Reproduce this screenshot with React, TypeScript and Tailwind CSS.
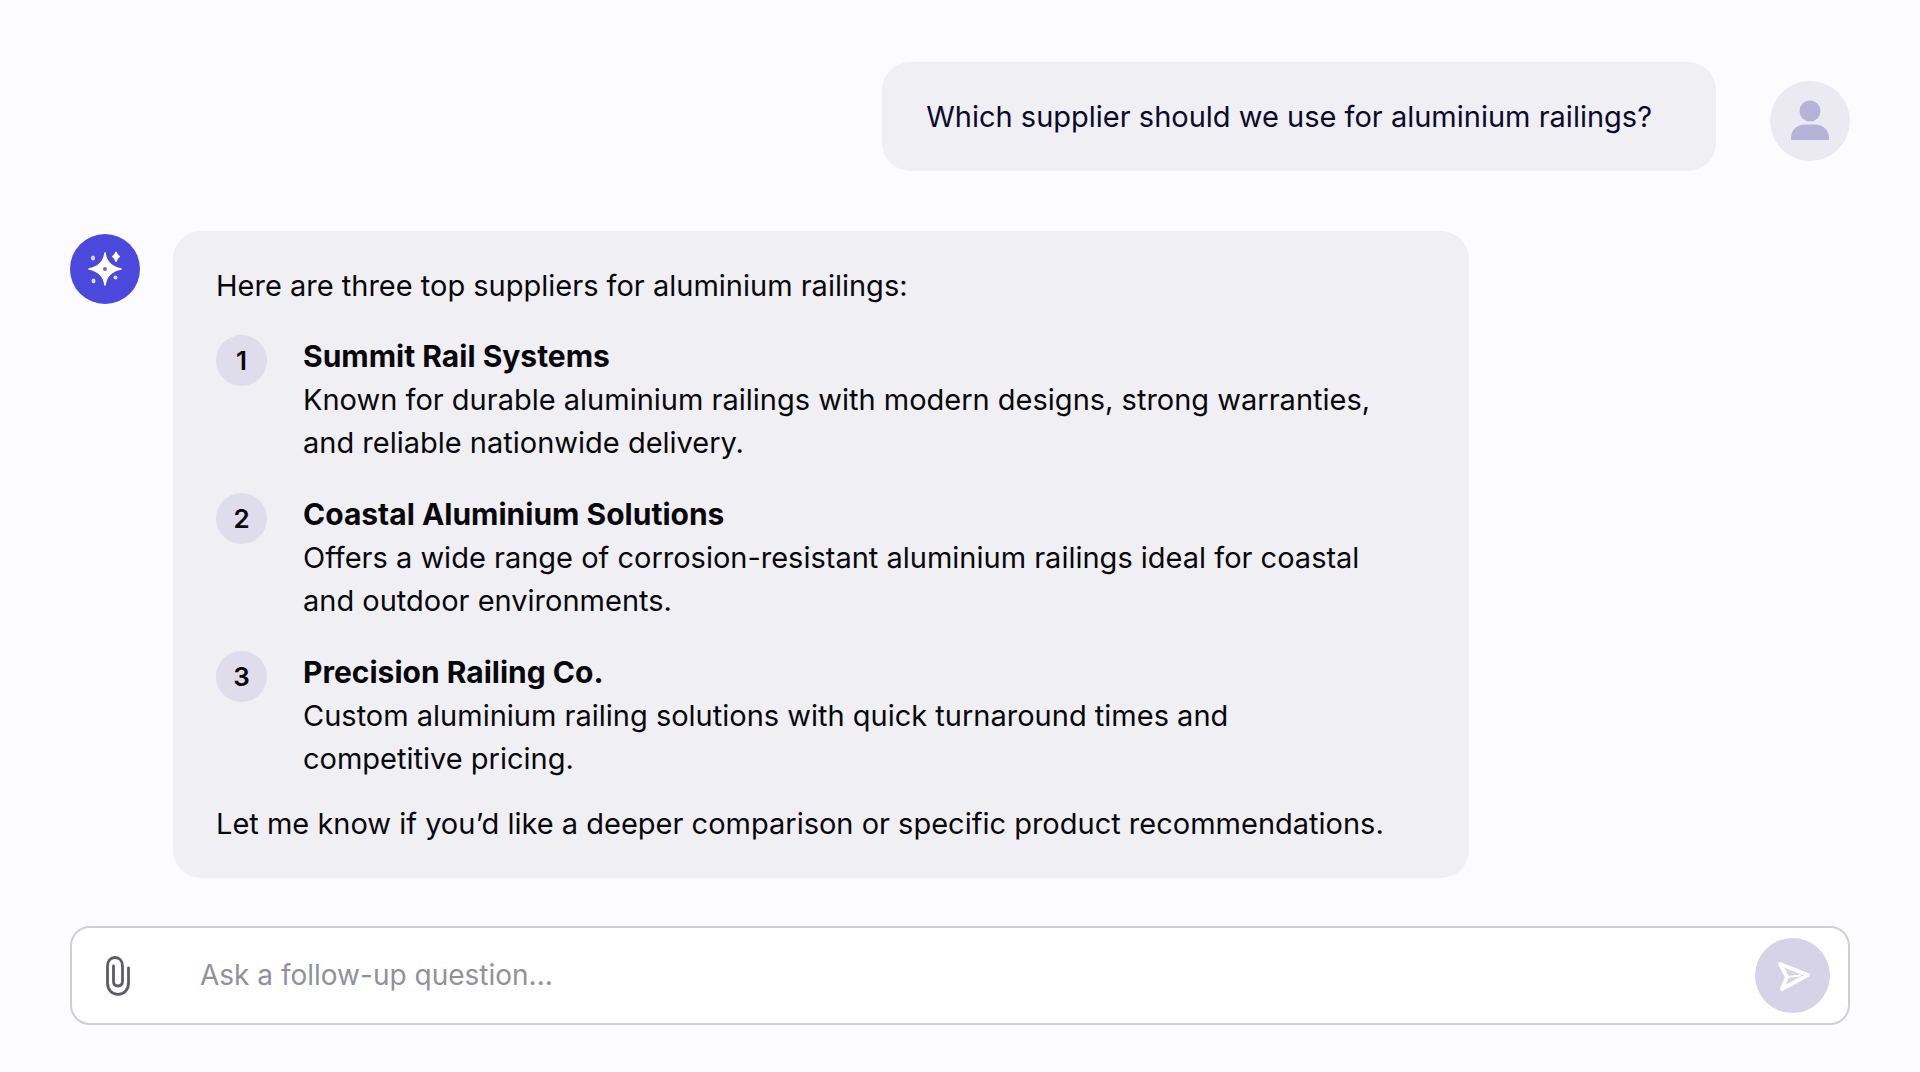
import { useState } from "react";

type Supplier = {
  name: string;
  description: string;
};

const suppliers: Supplier[] = [
  {
    name: "Summit Rail Systems",
    description:
      "Known for durable aluminium railings with modern designs, strong warranties, and reliable nationwide delivery.",
  },
  {
    name: "Coastal Aluminium Solutions",
    description:
      "Offers a wide range of corrosion-resistant aluminium railings ideal for coastal and outdoor environments.",
  },
  {
    name: "Precision Railing Co.",
    description:
      "Custom aluminium railing solutions with quick turnaround times and competitive pricing.",
  },
];

const SparkleIcon = () => (
  <svg viewBox="0 0 70 70" className="h-full w-full" fill="white" aria-hidden="true">
    <path d="M35 19 C36 28 41 33 51 35 C41 37 36 42 35 51 C34 42 29 37 19 35 C29 33 34 28 35 19 Z" stroke="white" strokeWidth="1.6" strokeLinejoin="round" />
    <path d="M46 18.5 C46.6 20.6 47.3 21.6 49 22.5 C47.3 23.4 46.6 24.4 46 27 C45.4 24.4 44.7 23.4 43 22.5 C44.7 21.6 45.4 20.6 46 18.5 Z" stroke="white" strokeWidth="1.8" strokeLinejoin="round" />
    <ellipse cx="23" cy="24" rx="2" ry="2.6" opacity="0.8" />
    <ellipse cx="23.5" cy="47" rx="2" ry="2.4" opacity="0.8" />
    <circle cx="45.5" cy="43.5" r="2" opacity="0.8" />
    <circle cx="35" cy="35" r="2" fill="#6d6bc0" />
  </svg>
);

const PersonIcon = () => (
  <svg viewBox="0 0 80 80" className="h-full w-full" fill="#b7b2d8" aria-hidden="true">
    <circle cx="40" cy="30" r="10.5" />
    <path d="M21 59 V57 C21 49 27 43.5 35 43.5 H45 C53 43.5 59 49 59 57 V59 Z" />
  </svg>
);

const ClipIcon = () => (
  <svg viewBox="0 0 24 40" className="h-10 w-6" fill="none" stroke="#5c5c69" strokeWidth="2.8" strokeLinecap="round" aria-hidden="true">
    <path d="M22.5 12 V27 C22.5 34 18 38.3 12 38.3 C6 38.3 1.5 34 1.5 27 V10 C1.5 5 4.5 1.5 9 1.5 C13.5 1.5 16.5 5 16.5 10 V25 C16.5 28.5 14.8 30 12 30 C9.2 30 7.5 28.5 7.5 25 V10" />
  </svg>
);

const SendIcon = () => (
  <svg viewBox="0 0 75 75" className="h-full w-full" fill="none" stroke="white" strokeWidth="3.8" strokeLinejoin="round" strokeLinecap="round" aria-hidden="true">
    <path d="M25 26 L53 37 L27 51 L32 39 Z" />
    <path d="M32 39 L45 37.5" strokeWidth="2.2" />
  </svg>
);

const SupplierItem = ({ supplier, rank }: { supplier: Supplier; rank: number }) => (
  <li className="flex gap-9">
    <span className="flex h-[51px] w-[51px] shrink-0 items-center justify-center rounded-full bg-[#dfdceb] text-[26px] font-semibold">
      {rank}
    </span>
    <div>
      <h2 className="text-[30px] leading-[43px] font-bold">{supplier.name}</h2>
      <p>{supplier.description}</p>
    </div>
  </li>
);

const App = () => {
  const [question, setQuestion] = useState("");

  return (
    <main className="flex min-h-screen flex-col bg-[#fcfcfe] px-[70px] pt-[62px] pb-10 font-['Inter',sans-serif] text-[29px] leading-[43px] text-[#08080c]">
      {/* User message */}
      <div className="flex items-center justify-end gap-[54px]">
        <p className="rounded-[28px] bg-[#f0eff4] py-[33px] pr-16 pl-11 text-[#0c0a2b]">
          Which supplier should we use for aluminium railings?
        </p>
        <div className="mt-2 h-20 w-20 shrink-0 rounded-full bg-[#ebeaf2]">
          <PersonIcon />
        </div>
      </div>

      {/* Assistant message */}
      <div className="mt-[60px] flex items-start gap-[33px]">
        <div className="mt-[3px] h-[70px] w-[70px] shrink-0 rounded-full bg-[#4b49dc]">
          <SparkleIcon />
        </div>
        <div className="w-full max-w-[1296px] rounded-[28px] bg-[#f0eff4] px-[43px] py-[33px]">
          <p>Here are three top suppliers for aluminium railings:</p>
          <ol className="mt-7 mb-[22px] flex flex-col gap-[29px] pr-12">
            {suppliers.map((supplier, index) => (
              <SupplierItem key={supplier.name} supplier={supplier} rank={index + 1} />
            ))}
          </ol>
          <p>Let me know if you’d like a deeper comparison or specific product recommendations.</p>
        </div>
      </div>

      {/* Follow-up box */}
      <form
        onSubmit={(event) => event.preventDefault()}
        className="mt-12 flex items-center rounded-[20px] border-2 border-[#cfcfd5] bg-white py-[10px] pr-[18px] pl-[34px]"
      >
        <button type="button" aria-label="Attach a file">
          <ClipIcon />
        </button>
        <input
          type="text"
          aria-label="Follow-up question"
          placeholder="Ask a follow-up question..."
          value={question}
          onChange={(event) => setQuestion(event.target.value)}
          className="ml-[70px] min-w-0 flex-1 bg-transparent text-[28px] outline-none placeholder:text-[#92909e]"
        />
        <button type="submit" aria-label="Send" className="h-[75px] w-[75px] shrink-0 rounded-full bg-[#d6d2e8]">
          <SendIcon />
        </button>
      </form>
    </main>
  );
};

export default App;
